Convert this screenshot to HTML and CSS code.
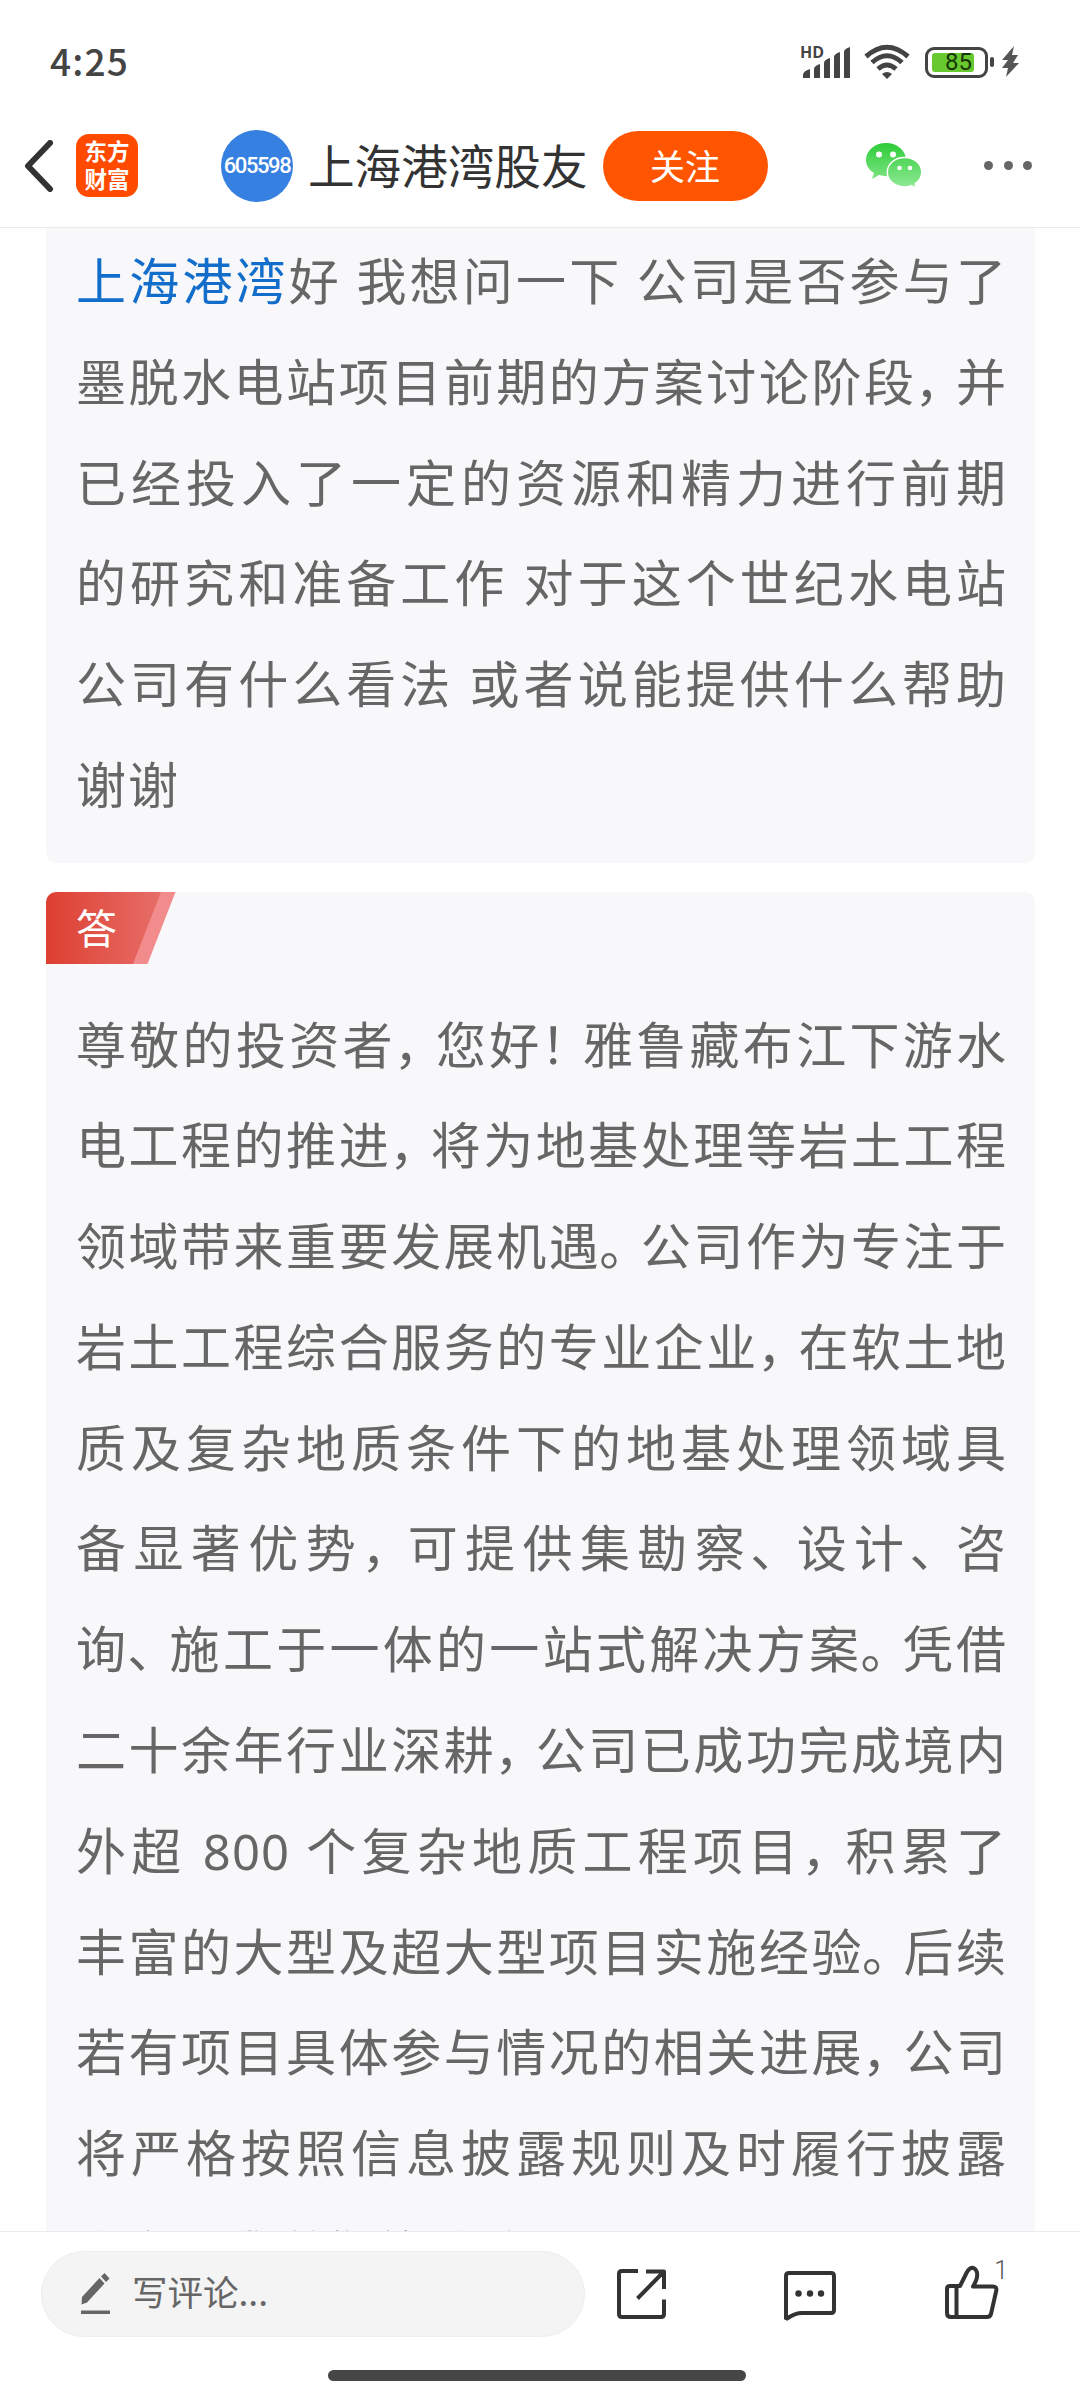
FILE: index.html
```html
<!DOCTYPE html>
<html lang="zh-CN">
<head>
	<meta charset="UTF-8">
	<title>上海港湾股友</title>
	<link rel="stylesheet" href="styles.css">
</head>
<body>
	<div class="phone">
		<div class="status">
			<span class="time">4:25</span>
			<div class="status-icons">
				<svg class="signal" width="52" height="36" viewBox="0 0 52 36">
					<text x="0" y="13.500" class="hd" textLength="24">HD</text>
					<path fill="#444" d="M3 34v-3q0-4 7-6v9zM14 34v-9q0-3 6-5v14zM24 34V19q0-3 6-5v20zM34 34V13q0-3 6-5v26zM44 34V8q0-3 6-5v31z"/>
				</svg>
				<svg class="wifi" width="46" height="36" viewBox="0 0 46 36">
					<g fill="none" stroke="#444" stroke-width="5">
						<path d="M2 12.500Q23-6 44 12.500"/>
						<path d="M8 18.500Q23 5 38 18.500"/>
						<path d="M14 25Q23 17 32 25"/>
					</g>
					<path fill="#444" d="M18 30q5-4 10 0l-5 5z"/>
				</svg>
				<div class="battery"><span class="level"></span><b>85</b></div>
				<i class="cap"></i>
				<svg class="bolt" width="18" height="32" viewBox="0 0 18 32"><path fill="#555" d="M13 0L1 14h6l-6 8h6l-2 9L18 17h-6l5-8h-6z"/></svg>
			</div>
		</div>
		<div class="nav">
			<svg class="back" width="30" height="52" viewBox="0 0 30 52"><path d="M26 3L4 26l22 23" fill="none" stroke="#333" stroke-width="6" stroke-linecap="round" stroke-linejoin="round"/></svg>
			<div class="logo">东方<br>财富</div>
			<div class="avatar"><span>605598</span></div>
			<h1>上海港湾股友</h1>
			<a class="follow">关注</a>
			<svg class="wechat" width="56" height="48" viewBox="0 0 56 48">
				<defs>
					<linearGradient id="green" x1="0" y1="0" x2="0" y2="48" gradientUnits="userSpaceOnUse">
						<stop offset="0" stop-color="#2bcb35"/>
						<stop offset="1" stop-color="#95eb9b"/>
					</linearGradient>
				</defs>
				<path fill="url(#green)" d="M20 1C9 1 0 8.500 0 18c0 5.500 3 10 8 13l-2 6 7-4c13 4 27-3 27-15C40 8.500 31 1 20 1z"/>
				<path fill="url(#green)" stroke="#fff" stroke-width="1.500" d="M38.500 15.500c-9.700 0-17.200 6.500-17.200 14.700s7.500 14.800 17.200 14.800c2.500 0 5-.5 7-1.400l5 2.900-1.300-4.800c4-2.700 6.600-6.700 6.600-11.500 0-8.200-7.600-14.700-17.300-14.700z"/>
				<g fill="#fff"><circle cx="13" cy="12.500" r="3"/><circle cx="27" cy="12.500" r="3"/><circle cx="33.500" cy="26" r="2.300"/><circle cx="44" cy="26" r="2.300"/></g>
			</svg>
			<div class="more"><i></i><i></i><i></i></div>
		</div>
		<div class="content">
			<div class="card ask">
				<p><a>上海港湾</a>好 我想问一下 公司是否参与了<br>墨脱水电站项目前期的方案讨论阶段<s>，</s>并<br>已经投入了一定的资源和精力进行前期<br>的研究和准备工作 对于这个世纪水电站<br>公司有什么看法 或者说能提供什么帮助</p>
				<p class="last">谢谢</p>
			</div>
			<div class="card answer">
				<div class="tag">
					<svg width="130" height="72" viewBox="0 0 130 72">
						<defs>
							<linearGradient id="red"><stop offset="0" stop-color="#dd3f30"/><stop offset="1" stop-color="#e76e69"/></linearGradient>
						</defs>
						<path fill="#f28b8c" d="M90 0h39.500L101.500 72H80z"/>
						<path fill="url(#red)" d="M0 0h115L87 72H0z"/>
					</svg>
					<span>答</span>
				</div>
				<p>尊敬的投资者<s>，</s>您好<s>！</s>雅鲁藏布江下游水<br>电工程的推进<s>，</s>将为地基处理等岩土工程<br>领域带来重要发展机遇<s>。</s>公司作为专注于<br>岩土工程综合服务的专业企业<s>，</s>在软土地<br>质及复杂地质条件下的地基处理领域具<br>备显著优势<s>，</s>可提供集勘察<s>、</s>设计<s>、</s>咨<br>询<s>、</s>施工于一体的一站式解决方案<s>。</s>凭借<br>二十余年行业深耕<s>，</s>公司已成功完成境内<br>外超 <em>800</em> 个复杂地质工程项目<s>，</s>积累了<br>丰富的大型及超大型项目实施经验<s>。</s>后续<br>若有项目具体参与情况的相关进展<s>，</s>公司<br>将严格按照信息披露规则及时履行披露</p>
				<p class="last">义务<s>，</s>感谢您的关注<s>！</s></p>
			</div>
		</div>
		<div class="footer">
			<div class="toolbar">
				<div class="comment">
					<svg width="30" height="42" viewBox="0 0 30 42" fill="#666"><path d="M.5 31.500L1 24 18.500 5l5 5.500L6 29.500zM20 3.500L23.500 0l5 5.500L25 9zM0 37.500h29v3.500H0z"/></svg>
					<span>写评论...</span>
				</div>
				<svg class="share" width="50" height="52" viewBox="0 0 50 52"><path d="M21 3H5q-3 0-3 3v40q0 3 3 3h39q3 0 3-3V31.500M29 3.500h18V21M46 4.500L20.500 30.500" fill="none" stroke="#333" stroke-width="4" stroke-linejoin="round" stroke-linecap="butt"/></svg>
				<svg class="chat" width="54" height="52" viewBox="0 0 54 52"><path d="M6 3h42q3 0 3 3v34q0 3-3 3H19Q12 43 4 48.500L3 48V6q0-3 3-3z" fill="none" stroke="#333" stroke-width="4"/><g fill="#333"><circle cx="15.500" cy="23.500" r="3.200"/><circle cx="27" cy="23.500" r="3.200"/><circle cx="38" cy="23.500" r="3.200"/></g></svg>
				<div class="like">
					<svg width="54" height="56" viewBox="0 0 54 56"><path d="M5 21h10L22 7q5-8 9.500-1Q34 12 28 21.500h20q4 0 3.300 4L46 49q-1 3-4 3H6q-4 0-4-4V24q0-3 3-3zM11.500 21v31" fill="none" stroke="#333" stroke-width="4" stroke-linejoin="round"/></svg>
					<sup>1</sup>
				</div>
			</div>
			<div class="home-bar"></div>
		</div>
	</div>
</body>
</html>
```

FILE: styles.css
```css
*{margin:0;padding:0;box-sizing:border-box}
body{
	background:#fff;
	font-family:"Noto Sans CJK SC",sans-serif;
	color:#333;
}
svg{
	display:block;
	flex:none;
}
.phone{
	width:1080px;
	height:2400px;
	display:flex;
	flex-direction:column;
	overflow:hidden;
}

/* 状态栏 */
.status{
	height:104px;
	padding:20px 61px 0 50px;
	display:flex;
	align-items:center;
	justify-content:space-between;
}
.time{
	font:500 37px/40px "Noto Sans CJK SC",sans-serif;
	letter-spacing:1.2px;
	color:#444;
	padding-bottom:4px;
}
.status-icons{
	display:flex;
	align-items:center;
}
.signal{overflow:visible}
.hd{
	font:bold 16px "Open Sans",sans-serif;
	fill:#444;
}
.wifi{margin-left:12px}
.battery{
	position:relative;
	width:63px;
	height:31px;
	margin-left:15px;
	padding:3px 4px;
	border:3px solid #444;
	border-radius:9px;
}
.battery .level{
	display:block;
	width:42px;
	height:19px;
	border-radius:3px;
	background:#68c82f;
}
.battery b{
	position:absolute;
	left:2px;
	top:-2px;
	width:57px;
	text-align:center;
	font:400 24px/29px Roboto,sans-serif;
	color:#173506;
}
.cap{
	width:4px;
	height:10px;
	margin-left:2px;
	border-radius:2px;
	background:#444;
}
.bolt{margin-left:7px}

/* 导航栏 */
.nav{
	height:124px;
	padding:0 48px 0 24px;
	display:flex;
	align-items:center;
	border-bottom:1px solid #ebebeb;
}
.logo{
	width:62px;
	height:63px;
	margin-left:22px;
	border-radius:13px;
	background:#ff4a00;
	color:#fff;
	font-size:22.500px;
	font-weight:700;
	line-height:28px;
	padding-top:2px;
	text-align:center;
}
.avatar{
	width:72px;
	height:72px;
	margin-left:83px;
	border-radius:50%;
	background:#3580e0;
	color:#fff;
	display:flex;
	align-items:center;
	justify-content:center;
	font:500 22px Roboto,sans-serif;
	letter-spacing:-1.4px;
}
h1{
	margin-left:15px;
	font-size:46.600px;
	font-weight:400;
	line-height:60px;
	padding-bottom:4px;
	white-space:nowrap;
}
.follow{
	width:165px;
	height:70px;
	margin-left:15px;
	border-radius:35px;
	background:#f50;
	color:#fff;
	font-size:35px;
	line-height:67px;
	text-align:center;
}
.wechat{margin-left:98px}
.more{
	margin-left:auto;
	display:flex;
	gap:10.500px;
}
.more i{
	width:9px;
	height:9px;
	border-radius:50%;
	background:#666;
}

/* 问答内容 */
.content{
	height:2003px;
	padding:0 45px 0 46px;
	overflow:hidden;
}
.card{
	background:#f8f8fa;
	border-radius:10px;
	padding:0 27px 0 30px;
}
.card p{
	font-size:50px;
	line-height:100.8px;
	letter-spacing:2px;
	color:#666;
	white-space:nowrap;
	text-align:justify;
	text-align-last:justify;
}
.card p.last{text-align-last:left}
.card a{color:#136ecb}
/* 标点收窄 */
.card s{
	text-decoration:none;
	margin-left:-2px;
	margin-right:-11px;
}
.card em{
	font-family:"Noto Sans",sans-serif;
	font-style:normal;
	font-size:49px;
	line-height:1;
	letter-spacing:1px;
}
.ask{
	height:635px;
	border-radius:0 0 10px 10px;
}
.answer{
	margin-top:29px;
	height:1600px;
	overflow:hidden;
}
.tag{
	position:relative;
	margin:0 -27px 27.500px -30px;
	height:72px;
}
.tag span{
	position:absolute;
	left:30px;
	top:0;
	font-size:41px;
	line-height:68px;
	color:#fff;
}

/* 底部工具栏 */
.footer{
	height:169px;
	background:#fff;
	border-top:1px solid #ebebeb;
}
.toolbar{
	height:123px;
	padding:0 0 0 41px;
	display:flex;
	align-items:center;
}
.comment{
	width:544px;
	height:86px;
	padding-left:39px;
	border:1px solid #ededed;
	border-radius:43px;
	background:#f4f4f4;
	display:flex;
	align-items:center;
	color:#666;
}
.comment span{
	margin-left:21px;
	padding-bottom:5px;
	font-size:35.500px;
	line-height:60px;
}
.share{margin-left:32px}
.chat{
	margin-left:116px;
	margin-top:4px;
}
.like{
	position:relative;
	margin-left:108px;
	margin-bottom:2px;
}
.like sup{
	position:absolute;
	right:-9px;
	top:-8px;
	font:300 25px/28px Roboto,sans-serif;
	color:#555;
}
.home-bar{
	width:418px;
	height:11px;
	margin:15px 0 0 328px;
	border-radius:6px;
	background:#464646;
}
```
